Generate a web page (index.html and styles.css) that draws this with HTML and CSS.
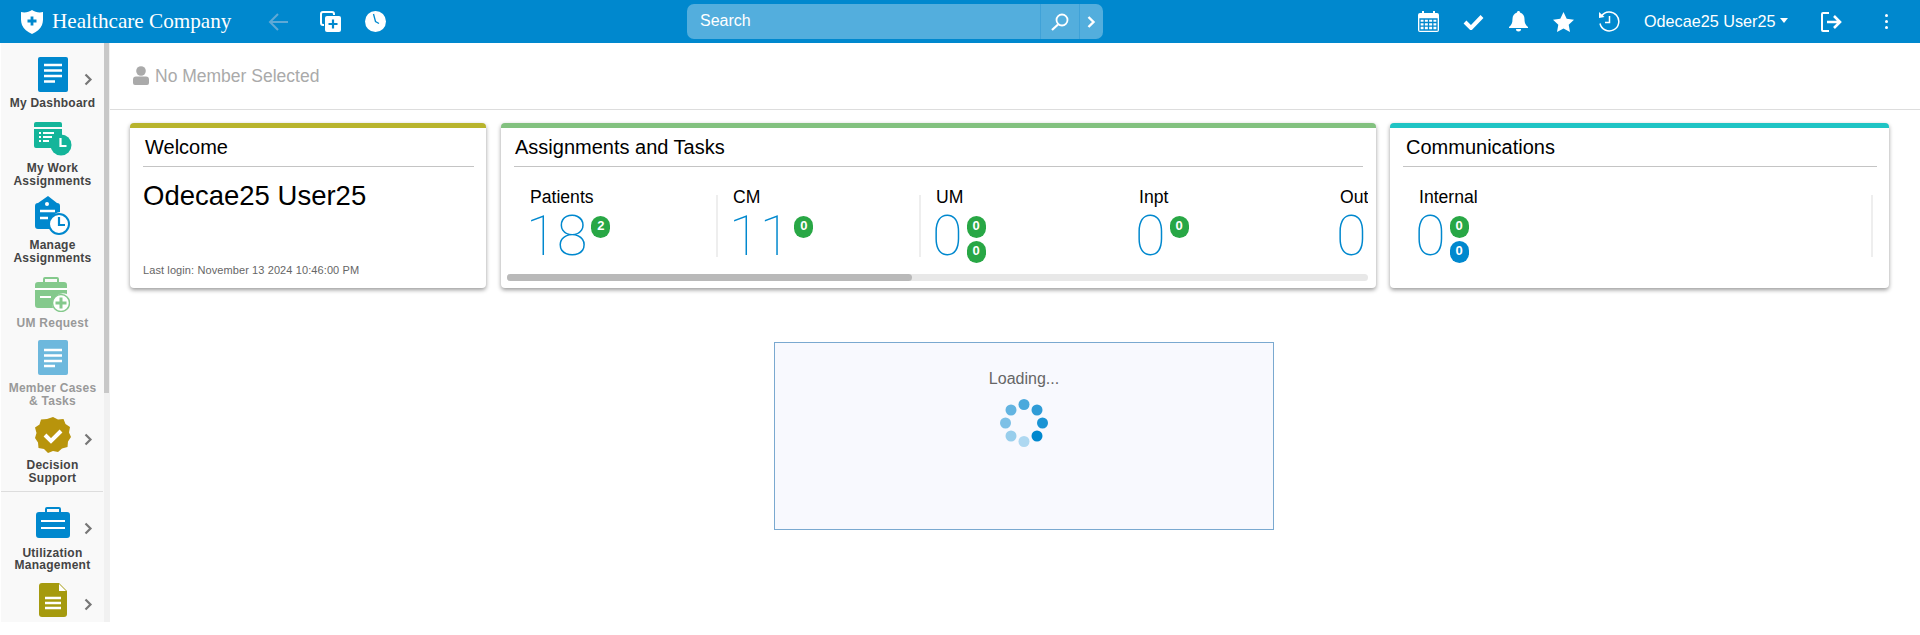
FILE: index.html
```html
<!DOCTYPE html>
<html lang="en">
<head>
	<meta charset="UTF-8">
	<title>Healthcare Company</title>
	<link rel="stylesheet" href="styles.css">
</head>
<body>
<header class="topbar">
	<svg class="ico-shield" viewBox="0 0 22 24"><path fill="#fff" d="M11 0C8 2 4 3 0 2c0 4-.5 9 1 13 1.500 4 5.500 7 10 9 4.500-2 8.500-5 10-9 1.500-4 1-9 1-13-4 1-8 0-11-2z"/><path fill="none" stroke="#0088ce" stroke-width="2.800" d="M11 6.500v9M6.500 11h9"/></svg>
	<span class="brand">Healthcare Company</span>
	<svg class="ico-back" viewBox="0 0 20 18"><path fill="none" stroke="#5fa9d6" stroke-width="2" d="M20 9H2M10 1L2 9l8 8"/></svg>
	<svg class="ico-copy" viewBox="0 0 21 21"><path fill="none" stroke="#fff" stroke-width="2" d="M4 14H3a2 2 0 0 1-2-2V3a2 2 0 0 1 2-2h9a2 2 0 0 1 2 2v1"/><rect x="5" y="5" width="16" height="16" rx="2" fill="#fff"/><path fill="none" stroke="#0088ce" stroke-width="2.200" d="M13 8.500v9M8.500 13h9"/></svg>
	<svg class="ico-clock" viewBox="0 0 21 21"><circle cx="10.500" cy="10.500" r="10.500" fill="#fff"/><path fill="none" stroke="#0088ce" stroke-width="1.300" d="M8.500 3l2 7.500 3.500 2"/></svg>

	<div class="search">
		<span class="search-text">Search</span>
		<span class="search-btn"><svg class="ico-find" viewBox="0 0 18 18"><circle cx="11" cy="7" r="5.500" fill="none" stroke="#fff" stroke-width="1.800"/><path stroke="#fff" stroke-width="2.200" d="M7 11.500L1 17"/></svg></span>
		<span class="search-more"><svg class="ico-more" viewBox="0 0 9 12"><path fill="none" stroke="#fff" stroke-width="2.400" d="M1.500 1l5 5-5 5"/></svg></span>
	</div>

	<div class="top-right">
		<svg class="ico-cal" viewBox="0 0 21 21"><path fill="#fff" d="M2 2h2V0h2v2h9V0h2v2h2a2 2 0 0 1 2 2v15a2 2 0 0 1-2 2H2a2 2 0 0 1-2-2V4a2 2 0 0 1 2-2z"/><path fill="none" stroke="#0088ce" stroke-width="1.300" d="M2 8h17v11H2zM2 11.500h17M2 15.200h17M6.200 8v11M10.500 8v11M14.800 8v11"/></svg>
		<svg class="ico-check" viewBox="0 0 21 16"><path fill="none" stroke="#fff" stroke-width="4" d="M2 8l6 6L19 2.500"/></svg>
		<svg class="ico-bell" viewBox="0 0 19 21"><path fill="#fff" d="M9.500 0c1 0 1.500.7 1.500 1.600C14 2.400 15.500 5 15.500 8c0 4 1 6 3.500 8v1H0v-1c2.500-2 3.500-4 3.500-8C3.500 5 5 2.400 8 1.600 8 .7 8.500 0 9.500 0zM7 18h5a2.500 2.500 0 0 1-5 0z"/></svg>
		<svg class="ico-star" viewBox="0 0 21 20"><path fill="#fff" d="M10.500 0l3.200 6.700 7.300 1-5.300 5.100 1.300 7.200-6.500-3.500L4 20l1.300-7.200L0 7.700l7.300-1z"/></svg>
		<svg class="ico-hist" viewBox="0 0 22 21"><path fill="none" stroke="#fff" stroke-width="1.500" d="M3.500 5A9.500 9.500 0 1 1 2 12.500M11.500 5v6.500H7"/><path fill="#fff" d="M1 1l5.500 5L1 7z"/></svg>
		<span class="user-name">Odecae25 User25</span>
		<span class="caret"></span>
		<svg class="ico-out" viewBox="0 0 22 20"><path fill="none" stroke="#fff" stroke-width="2" d="M8 1H2a1 1 0 0 0-1 1v16a1 1 0 0 0 1 1h6"/><path fill="none" stroke="#fff" stroke-width="2.600" d="M6 10h13M13 4l6 6-6 6"/></svg>
		<span class="kebab"><i></i><i></i><i></i></span>
	</div>
</header>

<div class="page">
	<aside class="sidebar">
		<nav class="side-list">
			<a class="nav-item">
				<svg class="ico-dash" viewBox="0 0 30 35"><rect width="30" height="35" rx="2" fill="#0088ce"/><path stroke="#fff" stroke-width="2.500" d="M6 8h18M6 13.500h18M6 19h18M6 24.500h11"/></svg>
				<svg class="chev" viewBox="0 0 9 13"><path fill="none" stroke="#777" stroke-width="2.200" d="M1.500 1.500l5 5-5 5"/></svg>
				<span class="nav-label nav-dark">My Dashboard</span>
			</a>
			<a class="nav-item">
				<svg class="ico-work" viewBox="0 0 38 34"><path fill="#14b59a" d="M2 0h24a2 2 0 0 1 2 2v3H0V2a2 2 0 0 1 2-2zM0 7h28v6a11 11 0 0 0-10 13H2a2 2 0 0 1-2-2z"/><path stroke="#fff" stroke-width="1.800" d="M5 11h2M9 11h11M5 15h2M9 15h9M5 19h2M9 19h6"/><circle cx="27" cy="23" r="10.500" fill="#14b59a"/><path fill="none" stroke="#fff" stroke-width="2.200" d="M26.500 16v8h6"/></svg>
				<span class="nav-label nav-dark">My Work<br>Assignments</span>
			</a>
			<a class="nav-item">
				<svg class="ico-manage" viewBox="0 0 35 39"><path fill="#0088ce" d="M13 0l9 7c2 0 3 1 3 3v6a12 12 0 0 0-10 15c0 1 .5 2 1 2H3a3 3 0 0 1-3-3V10c0-2 1-3 3-3z"/><circle cx="12" cy="8" r="2" fill="#fff"/><path stroke="#fff" stroke-width="2.500" d="M5 15h15M5 22h8"/><circle cx="24" cy="28" r="10" fill="#fff" stroke="#0088ce" stroke-width="2"/><path fill="none" stroke="#0088ce" stroke-width="2.200" d="M24 21v8h6"/></svg>
				<span class="nav-label nav-dark">Manage<br>Assignments</span>
			</a>
			<a class="nav-item">
				<svg class="ico-umreq" viewBox="0 0 35 35"><path fill="#84c98c" d="M10 0h12a2 2 0 0 1 2 2v3h5a3 3 0 0 1 3 3v9a11 11 0 0 0-14 14H3a3 3 0 0 1-3-3V8a3 3 0 0 1 3-3h5V2a2 2 0 0 1 2-2zm0 2v3h12V2z"/><path stroke="#fff" stroke-width="2" d="M0 12h32M5 20h11"/><circle cx="26" cy="26" r="8.500" fill="#fff" stroke="#84c98c" stroke-width="1.500"/><path stroke="#84c98c" stroke-width="3" d="M26 20.500v11M20.500 26h11"/></svg>
				<span class="nav-label nav-faded">UM Request</span>
			</a>
			<a class="nav-item">
				<svg class="ico-cases" viewBox="0 0 30 35"><rect width="30" height="35" rx="2" fill="#6db8dd"/><path stroke="#fff" stroke-width="2.500" d="M6 10h18M6 15.500h18M6 21h18M6 26h11"/></svg>
				<span class="nav-label nav-faded">Member Cases<br>&amp; Tasks</span>
			</a>
			<a class="nav-item">
				<svg class="ico-decision" viewBox="0 0 36 36"><path fill="#b8940c" d="M18 0l5 2.500 5.500-.5 2 5 4.500 3-1 5.500 2 4.500-3 4.500-.5 5.500-5.500 1.500L23 35l-5-1-5 2-4-4-5.500-1-.5-5.500L0 21l1.500-5L0 10.500l4.500-3 1.500-5L12 2z"/><path fill="none" stroke="#fff" stroke-width="4" d="M10 18l6 6 10-10"/></svg>
				<svg class="chev" viewBox="0 0 9 13"><path fill="none" stroke="#777" stroke-width="2.200" d="M1.500 1.500l5 5-5 5"/></svg>
				<span class="nav-label nav-dark">Decision<br>Support</span>
			</a>
			<hr class="nav-rule">
			<a class="nav-item">
				<svg class="ico-um" viewBox="0 0 34 31"><path fill="#0088ce" d="M11 0h12a2 2 0 0 1 2 2v3h6a3 3 0 0 1 3 3v20a3 3 0 0 1-3 3H3a3 3 0 0 1-3-3V8a3 3 0 0 1 3-3h6V2a2 2 0 0 1 2-2zm0 2v3h12V2z"/><path stroke="#fff" stroke-width="2.200" d="M5 14h24M5 21h24"/></svg>
				<svg class="chev" viewBox="0 0 9 13"><path fill="none" stroke="#777" stroke-width="2.200" d="M1.500 1.500l5 5-5 5"/></svg>
				<span class="nav-label nav-dark">Utilization<br>Management</span>
			</a>
			<a class="nav-item">
				<svg class="ico-doc" viewBox="0 0 28 34"><path fill="#a59a0e" d="M3 0h17l8 8v23a3 3 0 0 1-3 3H3a3 3 0 0 1-3-3V3a3 3 0 0 1 3-3z"/><path fill="#fff" d="M20 1l7 7h-7z"/><path stroke="#fff" stroke-width="2.500" d="M6 15h16M6 20h16M6 25h16"/></svg>
				<svg class="chev" viewBox="0 0 9 13"><path fill="none" stroke="#777" stroke-width="2.200" d="M1.500 1.500l5 5-5 5"/></svg>
			</a>
		</nav>
		<div class="side-track"><div class="side-thumb"></div></div>
	</aside>

	<main class="content">
		<div class="member-bar">
			<svg class="ico-member" viewBox="0 0 16 19"><circle cx="8" cy="5" r="4.800" fill="#aaa"/><path fill="#aaa" d="M3 10.500h10a3 3 0 0 1 3 3V17a2 2 0 0 1-2 2H2a2 2 0 0 1-2-2v-3.500a3 3 0 0 1 3-3z"/></svg>
			<span>No Member Selected</span>
		</div>

		<section class="cards">
			<div class="card card-welcome">
				<h2 class="card-title">Welcome</h2>
				<p class="welcome-name">Odecae25 User25</p>
				<p class="last-login">Last login: November 13 2024 10:46:00 PM</p>
			</div>

			<div class="card card-tasks">
				<h2 class="card-title">Assignments and Tasks</h2>
				<div class="stats">
					<div class="stat stat-line">
						<div class="stat-label">Patients</div>
						<div class="stat-row"><span class="stat-num">18</span><span class="badges"><b class="badge">2</b></span></div>
					</div>
					<div class="stat stat-line">
						<div class="stat-label">CM</div>
						<div class="stat-row"><span class="stat-num">11</span><span class="badges"><b class="badge">0</b></span></div>
					</div>
					<div class="stat">
						<div class="stat-label">UM</div>
						<div class="stat-row"><span class="stat-num">0</span><span class="badges"><b class="badge">0</b><b class="badge">0</b></span></div>
					</div>
					<div class="stat stat-short">
						<div class="stat-label">Inpt</div>
						<div class="stat-row"><span class="stat-num">0</span><span class="badges"><b class="badge">0</b></span></div>
					</div>
					<div class="stat">
						<div class="stat-label">Outpt</div>
						<div class="stat-row"><span class="stat-num">0</span></div>
					</div>
				</div>
				<div class="hscroll"><div class="hscroll-thumb"></div></div>
			</div>

			<div class="card card-comms">
				<h2 class="card-title">Communications</h2>
				<div class="stats">
					<div class="stat stat-wide stat-line">
						<div class="stat-label">Internal</div>
						<div class="stat-row"><span class="stat-num">0</span><span class="badges"><b class="badge">0</b><b class="badge badge-blue">0</b></span></div>
					</div>
				</div>
			</div>
		</section>

		<div class="loading">
			<p class="loading-text">Loading...</p>
			<svg class="spinner" viewBox="0 0 48 48">
				<circle cx="24" cy="5.500" r="5.500" fill="#4aa9dc"/>
				<circle cx="37" cy="11" r="5.500" fill="#2f9cd7"/>
				<circle cx="42.500" cy="24" r="5.500" fill="#1a94d4"/>
				<circle cx="37" cy="37" r="5.500" fill="#0088ce"/>
				<circle cx="24" cy="42.500" r="5.500" fill="#aed8f1"/>
				<circle cx="11" cy="37" r="5.500" fill="#98ceec"/>
				<circle cx="5.500" cy="24" r="5.500" fill="#7dc0e6"/>
				<circle cx="11" cy="11" r="5.500" fill="#63b4e1"/>
			</svg>
		</div>
	</main>
</div>
</body>
</html>
```
FILE: styles.css
```css
*{
	box-sizing: border-box;
}

html, body{
	height: 100%;
}

body{
	margin: 0;
	overflow: hidden;
	background: #fff;
	font-family: "Liberation Sans", Arial, sans-serif;
	color: #000;
}

svg{
	display: block;
	flex: none;
}

/* top bar */
.topbar{
	display: flex;
	align-items: center;
	height: 43px;
	padding-left: 21px;
	background: #0088ce;
	color: #fff;
}

.ico-shield{ width: 22px; height: 24px; }
.brand{
	margin-left: 9px;
	width: 216px;
	font-family: "Liberation Serif", serif;
	font-size: 21.200px;
	white-space: nowrap;
}
.ico-back{ width: 20px; height: 18px; }
.ico-copy{ width: 21px; height: 21px; margin-left: 32px; }
.ico-clock{ width: 21px; height: 21px; margin-left: 24px; }

.search{
	display: flex;
	align-items: stretch;
	width: 416px;
	height: 35px;
	margin-left: 301px;
	border-radius: 7px;
	background: #53aedd;
}
.search-text{
	flex: 1;
	padding-left: 13px;
	font-size: 16px;
	line-height: 33px;
}
.search-btn{
	display: flex;
	align-items: center;
	justify-content: center;
	width: 39px;
	border-left: 1px solid #3fa2d8;
}
.search-more{
	display: flex;
	align-items: center;
	justify-content: center;
	width: 24px;
	border-left: 1px solid #3fa2d8;
}
.ico-find{ width: 18px; height: 18px; }
.ico-more{ width: 9px; height: 12px; }

.top-right{
	display: flex;
	align-items: center;
	margin-left: 315px;
}
.ico-cal{ width: 21px; height: 21px; }
.ico-check{ width: 21px; height: 16px; margin-left: 24px; }
.ico-bell{ width: 19px; height: 21px; margin-left: 25px; }
.ico-star{ width: 21px; height: 20px; margin-left: 25px; }
.ico-hist{ width: 22px; height: 21px; margin-left: 24px; }
.user-name{
	margin-left: 24px;
	font-size: 16.200px;
	white-space: nowrap;
}
.caret{
	width: 0;
	height: 0;
	margin-left: 5px;
	margin-bottom: 3px;
	border-left: 4.500px solid transparent;
	border-right: 4.500px solid transparent;
	border-top: 5px solid #fff;
}
.ico-out{ width: 22px; height: 20px; margin-left: 33px; }
.kebab{
	display: flex;
	flex-direction: column;
	gap: 3px;
	margin-left: 42px;
}
.kebab i{
	width: 3px;
	height: 3px;
	border-radius: 50%;
	background: #fff;
}

/* sidebar */
.page{
	display: flex;
	height: 592px;
}

.sidebar{
	display: flex;
	flex: none;
	width: 110px;
	height: 579px;
}
.side-list{
	flex: 1;
	overflow: hidden;
	background: #f9f9f9;
	border-left: 1px solid #fff;
}
.side-track{
	width: 6px;
	background: #f1f1f1;
}
.side-thumb{
	width: 5px;
	height: 350px;
	background: #c8c8c8;
}

.nav-item{
	display: grid;
	grid-template-columns: 1fr 40px 1fr;
	align-items: center;
	justify-items: center;
}
.nav-item svg:first-child{
	grid-column: 2;
}
.chev{
	grid-column: 3;
	align-self: end;
	width: 9px;
	height: 13px;
}
/* chevrons sit a little under the middle of their icon */
.ico-dash + .chev{ margin-bottom: 11px; }
.ico-decision + .chev{ margin-bottom: 13px; }
.ico-um + .chev{ margin-bottom: 12px; }
.ico-doc + .chev{ margin-bottom: 5.500px; }

.nav-label{
	grid-column: 1 / -1;
	font-size: 12px;
	font-weight: bold;
	line-height: 12.500px;
	letter-spacing: 0.250px;
	text-align: center;
	white-space: nowrap;
}
.nav-dark{ color: #444; }
.nav-faded{ color: #999; }

.ico-dash{ width: 30px; height: 35px; margin-top: 14px; margin-bottom: 5px; }
.ico-work{ width: 38px; height: 34px; margin-top: 12.500px; margin-bottom: 6px; }
.ico-manage{ width: 35px; height: 39px; margin-top: 9px; margin-bottom: 4px; }
.ico-umreq{ width: 35px; height: 35px; margin-top: 13px; margin-bottom: 5px; }
.ico-cases{ width: 30px; height: 35px; margin-top: 10.500px; margin-bottom: 7px; }
.ico-decision{ width: 36px; height: 36px; margin-top: 9.500px; margin-bottom: 6.500px; }
.ico-um{ width: 34px; height: 31px; margin-top: 14.500px; margin-bottom: 9px; }
.ico-doc{ width: 28px; height: 34px; margin-top: 11px; }

.nav-rule{
	height: 1px;
	margin: 7px 1px 0 0;
	border: 0;
	background: #ddd;
}

/* main area */
.content{
	flex: 1;
	min-width: 0;
}

.member-bar{
	display: flex;
	align-items: center;
	gap: 6px;
	height: 67px;
	padding-left: 23px;
	border-bottom: 1px solid #ddd;
	font-size: 17.500px;
	color: #aaa;
}
.ico-member{ width: 16px; height: 19px; margin-top: -2px; }

.cards{
	display: flex;
	padding: 13px 0 0 20px;
}

.card{
	height: 165px;
	border-top: 5px solid;
	border-radius: 4px;
	background: #fff;
	box-shadow: 0 2px 4px rgba(0,0,0,0.4);
	overflow: hidden;
}
.card-welcome{
	width: 356px;
	margin-right: 15px;
	padding: 0 12px 0 13px;
	border-top-color: #b8b42d;
}
.card-tasks{
	width: 875px;
	margin-right: 14px;
	padding: 0 8px 0 6px;
	border-top-color: #82c17f;
}
.card-comms{
	width: 499px;
	padding: 0 12px 0 13px;
	border-top-color: #1fc4c4;
}

.card-title{
	height: 39px;
	margin: 0;
	padding: 5px 2px 0;
	border-bottom: 1px solid #c4c4c4;
	font-size: 20px;
	font-weight: normal;
	line-height: 28px;
	white-space: nowrap;
}
.card-tasks .card-title{
	margin: 0 5px 0 7px;
	padding-left: 1px;
}
.card-comms .card-title{
	padding-left: 3px;
}

.welcome-name{
	margin: 13px 0 0;
	font-size: 27.500px;
	line-height: 32px;
}
.last-login{
	margin: 51px 0 0;
	font-size: 11px;
	line-height: 14px;
	color: #666;
	letter-spacing: 0.100px;
}

.stats{
	display: flex;
	height: 87px;
	margin-top: 20px;
	padding-left: 20px;
	overflow: hidden;
}
.card-comms .stats{
	padding-left: 13px;
}
.stat{
	position: relative;
	flex: none;
	width: 203px;
	padding-left: 3px;
}
.stat-short{
	width: 201px;
}
.stat-wide{
	width: 469px;
}
/* the faint rule at the right of some columns */
.stat-line::after{
	content: "";
	position: absolute;
	top: 8px;
	right: 12px;
	width: 2px;
	height: 62px;
	background: #eee;
}
.stat-label{
	font-size: 17.600px;
	line-height: 20px;
	white-space: nowrap;
}
.stat-row{
	display: flex;
	margin-left: -4px;
	padding-top: 1px;
}
.stat-num{
	font-family: Roboto, sans-serif;
	font-size: 56px;
	font-weight: 100;
	line-height: 56px;
	color: #0088ce;
}
.badges{
	display: flex;
	flex-direction: column;
	gap: 3px;
	margin-left: 4px;
	padding-top: 8px;
}
.badge{
	width: 19px;
	height: 22px;
	border-radius: 9.500px;
	background: #28a745;
	color: #fff;
	font-size: 13px;
	line-height: 20px;
	text-align: center;
}
.badge-blue{
	background: #0088ce;
}

.hscroll{
	height: 7px;
	border-radius: 4px;
	background: #e8e8e8;
}
.hscroll-thumb{
	width: 405px;
	height: 7px;
	border-radius: 4px;
	background: #b9b9b9;
}

.loading{
	display: flex;
	flex-direction: column;
	align-items: center;
	width: 500px;
	height: 188px;
	margin: 54px 0 0 664px;
	border: 1px solid #7aa9d0;
	background: #f8f9fe;
}
.loading-text{
	margin: 26px 0 0;
	font-size: 16px;
	line-height: 20px;
	color: #666;
}
.spinner{
	width: 48px;
	height: 48px;
	margin-top: 10px;
}
```
